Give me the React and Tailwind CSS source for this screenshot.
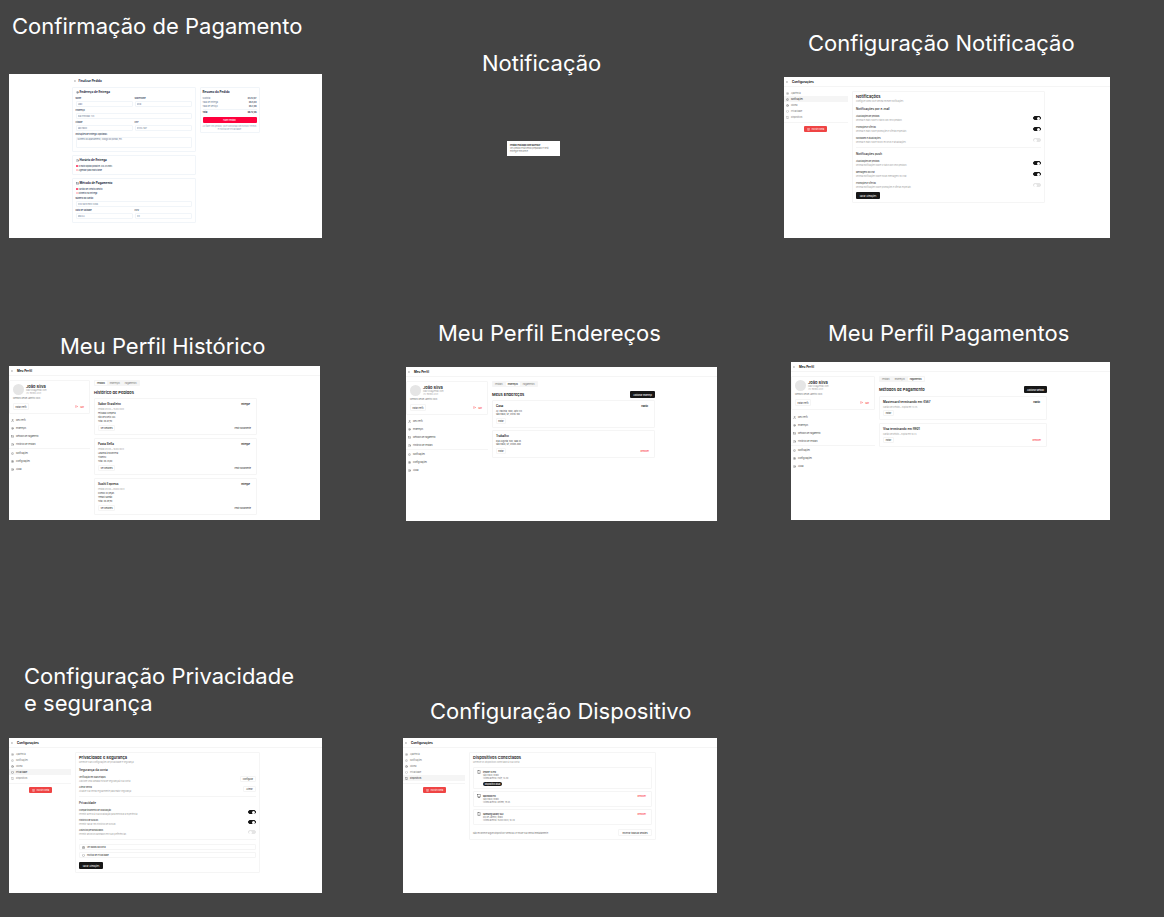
import React from 'react';
import {
  ArrowLeft, Bell, Clock, CreditCard, CircleHelp, FileText, Globe, LogOut, MapPin,
  Monitor, Settings, Shield, Smartphone, Sun, Trash2, User,
} from 'lucide-react';

const icon = 'size-[3px] shrink-0';

function Title({ place, children }) {
  return (
    <h2 className={`absolute text-[22px] leading-[27px] font-normal whitespace-nowrap text-white ${place}`}>
      {children}
    </h2>
  );
}

function Board({ place, label, children }) {
  return (
    <section aria-label={label} className={`absolute overflow-hidden bg-white text-[2px] leading-[4px] whitespace-nowrap text-neutral-700 ${place}`}>
      {children}
    </section>
  );
}

function TopBar({ children }) {
  return (
    <header className="flex h-[10px] items-center gap-[4px] border-b border-neutral-100 pl-[2px]">
      <a href="#voltar" aria-label="Voltar"><ArrowLeft className="size-[2px]" strokeWidth={3} /></a>
      <h3 className="text-[3px] font-bold text-neutral-900">{children}</h3>
    </header>
  );
}

/* ---------- Checkout ---------- */

function Field({ id, label, value, area }) {
  return (
    <div className="flex min-w-0 flex-1 flex-col">
      <label htmlFor={id} className="leading-[5px] font-semibold text-slate-700">{label}</label>
      {area ? (
        <textarea id={id} placeholder={value} className="block h-[11px] w-full resize-none rounded-[1px] border border-slate-100 px-px leading-[3px] placeholder:text-slate-500" />
      ) : (
        <input id={id} placeholder={value} className="h-[6px] w-full rounded-[1px] border border-slate-100 px-px placeholder:text-slate-500" />
      )}
    </div>
  );
}

function FormCard({ Icon, title, bottom, children }) {
  return (
    <section className={`rounded-[1px] border border-slate-100 px-[3px] pt-[2px] ${bottom}`}>
      <h4 className="mb-[2px] flex items-center gap-px text-[3px] leading-[4px] font-bold text-slate-800">
        <Icon className={icon} />{title}
      </h4>
      {children}
    </section>
  );
}

function Radio({ name, checked, children }) {
  return (
    <label className="flex items-center gap-px font-medium text-slate-700">
      <input type="radio" name={name} defaultChecked={checked} className="size-[2px] appearance-none rounded-full border border-rose-300 checked:border-[#ff003c] checked:bg-[#ff003c]" />
      {children}
    </label>
  );
}

function Checkout() {
  return (
    <div className="mx-auto w-[188px]">
      <header className="flex h-[13px] items-center gap-[3px] pl-[2px]">
        <a href="#voltar" aria-label="Voltar"><ArrowLeft className="size-[2px]" strokeWidth={3} /></a>
        <h3 className="text-[3px] font-bold text-slate-800">Finalizar Pedido</h3>
      </header>
      <div className="flex items-start gap-[4px]">
        <form className="flex w-[124px] flex-col gap-[3px]">
          <FormCard Icon={MapPin} title="Endereço de Entrega" bottom="pb-[3px]">
            <div className="flex flex-col gap-px">
              <div className="flex gap-[2px]">
                <Field id="nome" label="Nome" value="João" />
                <Field id="sobrenome" label="Sobrenome" value="Silva" />
              </div>
              <Field id="endereco" label="Endereço" value="Rua Principal, 123" />
              <div className="flex gap-[2px]">
                <Field id="cidade" label="Cidade" value="São Paulo" />
                <Field id="cep" label="CEP" value="01234-567" />
              </div>
              <Field id="instrucoes" label="Instruções de Entrega (Opcional)" value="Número do apartamento, código do portão, etc." area />
            </div>
          </FormCard>
          <FormCard Icon={Clock} title="Horário de Entrega" bottom="pb-[2px]">
            <Radio name="horario" checked>O mais rápido possível (30-45 min)</Radio>
            <Radio name="horario">Agendar para mais tarde</Radio>
          </FormCard>
          <FormCard Icon={CreditCard} title="Método de Pagamento" bottom="pb-[3px]">
            <Radio name="pagamento" checked>Cartão de Crédito/Débito</Radio>
            <Radio name="pagamento">Dinheiro na Entrega</Radio>
            <div className="mt-px flex flex-col gap-px">
              <Field id="cartao" label="Número do Cartão" value="1234 5678 9012 3456" />
              <div className="flex gap-[2px]">
                <Field id="validade" label="Data de Validade" value="MM/AA" />
                <Field id="cvv" label="CVV" value="123" />
              </div>
            </div>
          </FormCard>
        </form>
        <aside className="min-w-0 flex-1 rounded-[1px] border border-slate-100 px-[2px] pt-[2px] pb-px">
          <h4 className="mb-[2px] text-[3px] leading-[4px] font-bold text-slate-800">Resumo do Pedido</h4>
          <dl className="text-slate-500">
            {[['Subtotal', 'R$ 63,97'], ['Taxa de Entrega', 'R$ 5,00'], ['Taxa de Serviço', 'R$ 3,99']].map(([k, v]) => (
              <div key={k} className="flex justify-between"><dt>{k}</dt><dd className="font-semibold text-slate-700">{v}</dd></div>
            ))}
            <div className="mt-px flex justify-between border-t border-slate-100 leading-[5px] font-bold text-slate-800">
              <dt>Total</dt><dd>R$ 72,96</dd>
            </div>
          </dl>
          <button className="mt-[2px] block h-[6px] w-full rounded-[1px] bg-[#ff003c] font-medium text-white">Fazer Pedido</button>
          <p className="mt-[2px] text-center leading-[3px] whitespace-normal text-slate-400">
            Ao fazer seu pedido, você concorda com nossos Termos e <a href="#privacidade">Política de Privacidade</a>
          </p>
        </aside>
      </div>
    </div>
  );
}

/* ---------- Settings ---------- */

const settingsNav = [
  [Sun, 'Aparência'], [Bell, 'Notificações'], [Globe, 'Idioma'], [Shield, 'Privacidade'], [Smartphone, 'Dispositivos'],
];

function SettingsPage({ active, side, main, title, intro, children }) {
  return (
    <>
      <TopBar>Configurações</TopBar>
      <div className="flex items-start gap-[4px]">
        <nav className={`flex flex-col pt-[3px] ${side}`}>
          {settingsNav.map(([Icon, name]) => (
            <a key={name} href={`#${name}`} className={name === active
              ? 'flex h-[6px] items-center gap-[2px] bg-neutral-100 pl-[2px] text-neutral-900'
              : 'flex h-[6px] items-center gap-[2px] pl-[2px] text-neutral-500'}>
              <Icon className={icon} />{name}
            </a>
          ))}
          <div className="mt-[2px] border-t border-neutral-100 pt-[3px] pl-[20px]">
            <button className="flex h-[6px] w-[23px] items-center justify-center gap-[2px] rounded-[1px] bg-[#ef4444] text-white">
              <Trash2 className={icon} />Excluir Conta
            </button>
          </div>
        </nav>
        <section className={`mt-[4px] rounded-[1px] border border-neutral-100 px-[3px] pt-[2px] pb-[3px] ${main}`}>
          <h4 className="text-[4px] leading-[5px] font-semibold text-neutral-900">{title}</h4>
          <p className="text-neutral-400">{intro}</p>
          {children}
        </section>
      </div>
    </>
  );
}

function Row({ title, text, children }) {
  return (
    <div className="flex items-center justify-between">
      <div>
        <h6 className="font-medium">{title}</h6>
        <p className="text-neutral-400">{text}</p>
      </div>
      {children}
    </div>
  );
}

function Switch({ label, on }) {
  return (
    <input type="checkbox" role="switch" aria-label={label} defaultChecked={on}
      className="flex h-[4px] w-[8px] appearance-none items-center rounded-full border border-neutral-200 bg-neutral-200 before:block before:size-[3px] before:rounded-full before:bg-white checked:justify-end checked:border-neutral-900 checked:bg-neutral-900" />
  );
}

function Toggles({ rows, gap }) {
  return (
    <div className={`mt-[3px] flex flex-col ${gap}`}>
      {rows.map(([title, text, on]) => (
        <Row key={title} title={title} text={text}><Switch label={title} on={on} /></Row>
      ))}
    </div>
  );
}

function SubTitle({ children }) {
  return <h5 className="mt-[4px] text-[3px] leading-[4px] font-medium text-neutral-900">{children}</h5>;
}

function SaveButton({ space }) {
  return <button className={`block h-[7px] w-[24px] rounded-[1px] bg-neutral-900 text-white ${space}`}>Salvar Alterações</button>;
}

function Notifications() {
  return (
    <SettingsPage active="Notificações" side="w-[64px]" main="w-[193px]" title="Notificações" intro="Configure como você deseja receber notificações">
      <SubTitle>Notificações por e-mail</SubTitle>
      <Toggles gap="gap-[3px]" rows={[
        ['Atualizações de pedidos', 'Receba e-mails sobre o status dos seus pedidos', true],
        ['Promoções e ofertas', 'Receba e-mails sobre promoções e ofertas especiais', true],
        ['Novidades e atualizações', 'Receba e-mails sobre novos recursos e atualizações', false],
      ]} />
      <hr className="mt-[3px] border-neutral-100" />
      <SubTitle>Notificações push</SubTitle>
      <Toggles gap="gap-[3px]" rows={[
        ['Atualizações de pedidos', 'Receba notificações sobre o status dos seus pedidos', true],
        ['Mensagens do chat', 'Receba notificações sobre novas mensagens no chat', true],
        ['Promoções e ofertas', 'Receba notificações sobre promoções e ofertas especiais', false],
      ]} />
      <SaveButton space="mt-[3px]" />
    </SettingsPage>
  );
}

const outline = 'rounded-[1px] border border-neutral-100 font-medium';

function Privacy() {
  return (
    <SettingsPage active="Privacidade" side="w-[62px]" main="w-[185px]" title="Privacidade e Segurança" intro="Gerencie suas configurações de privacidade e segurança">
      <SubTitle>Segurança da conta</SubTitle>
      <div className="mt-[3px] flex flex-col gap-[2px]">
        <Row title="Verificação em duas etapas" text="Adicione uma camada extra de segurança à sua conta">
          <button className={`h-[6px] w-[16px] ${outline}`}>Configurar</button>
        </Row>
        <Row title="Alterar senha" text="Atualize sua senha regularmente para maior segurança">
          <button className={`h-[6px] w-[13px] ${outline}`}>Alterar</button>
        </Row>
      </div>
      <hr className="mt-[3px] border-neutral-100" />
      <SubTitle>Privacidade</SubTitle>
      <Toggles gap="gap-[2px]" rows={[
        ['Compartilhamento de localização', 'Permitir acesso à sua localização para melhorar a experiência', true],
        ['Histórico de buscas', 'Permitir salvar seu histórico de buscas', true],
        ['Anúncios personalizados', 'Permitir anúncios baseados em suas preferências', false],
      ]} />
      <hr className="mt-[3px] border-neutral-100" />
      <div className="mt-[4px] flex flex-col gap-[2px]">
        <button className={`flex h-[6px] items-center gap-[2px] px-[2px] ${outline}`}><FileText className={icon} />Ver dados da conta</button>
        <button className={`flex h-[6px] items-center gap-[2px] px-[2px] ${outline}`}><Shield className={icon} />Política de Privacidade</button>
      </div>
      <SaveButton space="mt-[4px]" />
    </SettingsPage>
  );
}

function Devices() {
  const devices = [
    [Smartphone, 'iPhone 13 Pro', 'São Paulo, Brasil', 'Último acesso: Hoje, 14:30', true],
    [Monitor, 'MacBook Pro', 'São Paulo, Brasil', 'Último acesso: Ontem, 19:45', false],
    [Smartphone, 'Samsung Galaxy S22', 'Rio de Janeiro, Brasil', 'Último acesso: 15/03/2023, 10:20', false],
  ];
  return (
    <SettingsPage active="Dispositivos" side="w-[62px]" main="w-[187px]" title="Dispositivos Conectados" intro="Gerencie os dispositivos conectados à sua conta">
      <ul className="mt-[3px] flex flex-col gap-[2px]">
        {devices.map(([Icon, name, place, seen, current]) => (
          <li key={name} className="flex items-start gap-[2px] rounded-[1px] border border-neutral-100 px-[3px] py-[2px]">
            <Icon className="size-[4px] shrink-0 text-neutral-900" />
            <div className="leading-[3px] text-neutral-500">
              <h6 className="leading-[4px] font-semibold text-neutral-800">{name}</h6>
              <p>{place}</p>
              <p>{seen}</p>
              {current && <span className="mt-[2px] flex h-[4px] w-[19px] items-center justify-center rounded-full bg-neutral-900 font-medium text-white">Dispositivo atual</span>}
            </div>
            {!current && <button className="ml-auto pr-[2px] font-medium text-red-500">Remover</button>}
          </li>
        ))}
      </ul>
      <div className="mt-[4px] flex items-center justify-between">
        <p className="text-neutral-500">Não reconhece algum dispositivo? Remova-o e mude sua senha imediatamente.</p>
        <button className={`h-[7px] w-[34px] ${outline}`}>Encerrar todas as sessões</button>
      </div>
    </SettingsPage>
  );
}

/* ---------- Profile ---------- */

const menu = [
  [User, 'Meu Perfil'], [MapPin, 'Endereços'], [CreditCard, 'Métodos de Pagamento'], [Clock, 'Histórico de Pedidos'],
  [Bell, 'Notificações'], [Settings, 'Configurações'], [CircleHelp, 'Ajuda'],
];

function MenuGroup({ items }) {
  return items.map(([Icon, name]) => (
    <a key={name} href={`#${name}`} className="flex h-[8px] items-center gap-[2px] pl-[2px]"><Icon className={icon} />{name}</a>
  ));
}

function ProfilePage({ active, side, menuSpace, main, title, action, children }) {
  return (
    <>
      <TopBar>Meu Perfil</TopBar>
      <div className="flex items-start gap-[4px] pt-[4px]">
        <aside className={side}>
          <section className="rounded-[1px] border border-neutral-100 p-[3px]">
            <div className="flex items-center gap-[2px]">
              <span className="size-[11px] rounded-full bg-neutral-200" />
              <div className="leading-[3px] text-neutral-400">
                <h4 className="text-[4px] leading-[4px] font-semibold text-neutral-900">João Silva</h4>
                <p>joao.silva@email.com</p>
                <p>(11) 98765-4321</p>
              </div>
            </div>
            <p className="mt-px text-neutral-500">Membro desde Janeiro 2023</p>
            <div className="mt-[3px] flex items-center justify-between">
              <button className={`h-[7px] w-[16px] ${outline}`}>Editar Perfil</button>
              <button className="flex items-center gap-[2px] pr-[2px] font-medium text-red-500"><LogOut className={icon} />Sair</button>
            </div>
          </section>
          <nav className={menuSpace}>
            <MenuGroup items={menu.slice(0, 4)} />
            <hr className="border-neutral-100" />
            <MenuGroup items={menu.slice(4)} />
          </nav>
        </aside>
        <section className={main}>
          <div role="tablist" className="flex h-[6px] w-fit items-center gap-px rounded-[1px] bg-neutral-100 px-px">
            {['Pedidos', 'Endereços', 'Pagamentos'].map((t) => (
              <button key={t} role="tab" aria-selected={t === active} className={t === active
                ? 'rounded-[1px] bg-white px-[2px] font-medium text-neutral-900'
                : 'px-[2px] text-neutral-500'}>{t}</button>
            ))}
          </div>
          <div className="mt-[4px] flex items-center justify-between">
            <h3 className="text-[4px] leading-[5px] font-semibold text-neutral-900">{title}</h3>
            {action && <button className="h-[7px] rounded-[1px] bg-neutral-900 px-[3px] font-medium text-white">{action}</button>}
          </div>
          {children}
        </section>
      </div>
    </>
  );
}

const entry = 'rounded-[1px] border border-neutral-100 p-[3px]';

function EntryHead({ title, tag }) {
  return (
    <div className="flex justify-between pr-px text-neutral-900">
      <h4 className="text-[3px] leading-[4px] font-semibold">{title}</h4>
      {tag && <span className="pr-[2px] font-bold">{tag}</span>}
    </div>
  );
}

function EntryFoot({ label, width, right, tone }) {
  return (
    <div className="flex items-center justify-between pr-[2px]">
      <button className={`h-[6px] ${width} ${outline}`}>{label}</button>
      {right && <button className={`font-medium ${tone}`}>{right}</button>}
    </div>
  );
}

function Orders() {
  const orders = [
    ['Sabor Brasileiro', 'Pedido #1234 • 15/03/2023', 'Feijoada Completa', 'Pão de Queijo (6x)', 'Total: R$ 67,90'],
    ['Pasta Bella', 'Pedido #1235 • 10/03/2023', 'Lasanha à Bolonhesa', 'Tiramisu', 'Total: R$ 45,80'],
    ['Sushi Express', 'Pedido #1236 • 05/03/2023', 'Combo 20 peças', 'Temaki Salmão', 'Total: R$ 89,90'],
  ];
  return (
    <ProfilePage active="Pedidos" side="w-[81px]" menuSpace="mt-[2px]" main="w-[163px]" title="Histórico de Pedidos">
      <div className="mt-[3px] flex flex-col gap-[3px]">
        {orders.map(([name, meta, a, b, total]) => (
          <article key={name} className={entry}>
            <EntryHead title={name} tag="Entregue" />
            <p className="mt-px text-neutral-400">{meta}</p>
            <p>{a}</p>
            <p>{b}</p>
            <p className="mb-[2px]">{total}</p>
            <EntryFoot label="Ver Detalhes" width="w-[17px]" right="Pedir Novamente" tone="text-neutral-700" />
          </article>
        ))}
      </div>
    </ProfilePage>
  );
}

function Addresses() {
  return (
    <ProfilePage active="Endereços" side="w-[82px]" menuSpace="mt-[2px]" main="w-[163px]" title="Meus Endereços" action="Adicionar Endereço">
      <div className="mt-[2px] flex flex-col gap-[2px]">
        {[
          ['Casa', 'Padrão', 'Av. Paulista, 1000, Apto 123', 'São Paulo, SP, 01310-100', null],
          ['Trabalho', null, 'Rua Augusta, 500, Sala 45', 'São Paulo, SP, 01305-000', 'Remover'],
        ].map(([name, tag, a, b, right]) => (
          <article key={name} className={entry}>
            <EntryHead title={name} tag={tag} />
            <div className="my-[2px] leading-[3px]"><p>{a}</p><p>{b}</p></div>
            <EntryFoot label="Editar" width="w-[10px]" right={right} tone="text-red-500" />
          </article>
        ))}
      </div>
    </ProfilePage>
  );
}

function Payments() {
  return (
    <ProfilePage active="Pagamentos" side="w-[84px]" menuSpace="mt-[3px]" main="w-[168px]" title="Métodos de Pagamento" action="Adicionar Método">
      <div className="mt-[3px] flex flex-col gap-[3px]">
        {[
          ['Mastercard terminando em 4567', 'Padrão', 'Cartão de Crédito • Expira em 12/25', null],
          ['Visa terminando em 8901', null, 'Cartão de Débito • Expira em 10/24', 'Remover'],
        ].map(([name, tag, text, right]) => (
          <article key={name} className={entry}>
            <EntryHead title={name} tag={tag} />
            <p className="my-px text-neutral-400">{text}</p>
            <EntryFoot label="Editar" width="w-[11px]" right={right} tone="text-red-500" />
          </article>
        ))}
      </div>
    </ProfilePage>
  );
}

export default function App() {
  return (
    <main className="relative min-h-screen w-full bg-[#444444] font-['Inter',sans-serif]">
      <Title place="left-[12px] top-[13px]">Confirmação de Pagamento</Title>
      <Board place="left-[9px] top-[74px] h-[164px] w-[313px]" label="Confirmação de Pagamento"><Checkout /></Board>

      <Title place="left-[482px] top-[50px]">Notificação</Title>
      <Board place="left-[507px] top-[141px] h-[15px] w-[53px]" label="Notificação">
        <div role="status" className="px-[3px] pt-[3px] leading-[3px] text-neutral-500">
          <p className="font-bold text-neutral-900">Pedido realizado com sucesso!</p>
          <p>Seu pedido está sendo preparado e será</p>
          <p>entregue em breve.</p>
        </div>
      </Board>

      <Title place="left-[808px] top-[30px]">Configuração Notificação</Title>
      <Board place="left-[784px] top-[77px] h-[161px] w-[326px]" label="Configuração Notificação"><Notifications /></Board>

      <Title place="left-[60px] top-[333px]">Meu Perfil Histórico</Title>
      <Board place="left-[9px] top-[366px] h-[154px] w-[311px]" label="Meu Perfil Histórico"><Orders /></Board>

      <Title place="left-[438px] top-[320px]">Meu Perfil Endereços</Title>
      <Board place="left-[406px] top-[367px] h-[154px] w-[311px]" label="Meu Perfil Endereços"><Addresses /></Board>

      <Title place="left-[828px] top-[320px]">Meu Perfil Pagamentos</Title>
      <Board place="left-[791px] top-[362px] h-[158px] w-[319px]" label="Meu Perfil Pagamentos"><Payments /></Board>

      <Title place="left-[24px] top-[663px]">Configuração Privacidade<br />e segurança</Title>
      <Board place="left-[9px] top-[738px] h-[155px] w-[313px]" label="Configuração Privacidade e segurança"><Privacy /></Board>

      <Title place="left-[430px] top-[698px]">Configuração Dispositivo</Title>
      <Board place="left-[403px] top-[738px] h-[155px] w-[314px]" label="Configuração Dispositivo"><Devices /></Board>
    </main>
  );
}
